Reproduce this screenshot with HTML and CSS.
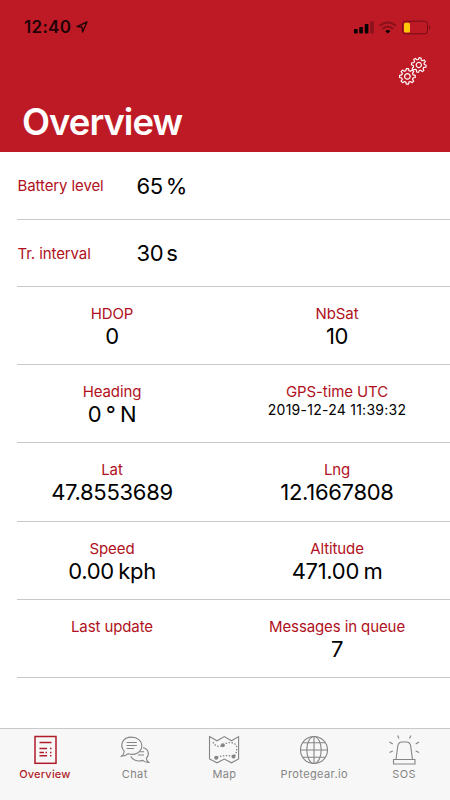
FILE: index.html
```html
<!DOCTYPE html>
<html lang="en">
<head>
    <meta charset="UTF-8">
    <meta name="viewport" content="width=device-width, initial-scale=1.0">
    <title>Overview</title>
    <link rel="stylesheet" href="styles.css">
</head>
<body>
<header class="header">
    <div class="status-bar">
        <div class="status-time">
            <span>12:40</span>
            <svg class="location" viewBox="0 0 12 12">
                <path d="M1 5.6 L11 1 L6.6 11 L6 6 Z"/>
            </svg>
        </div>
        <svg class="status-icons" viewBox="0 0 78 16">
            <rect x="1" y="9" width="3.6" height="4.4" rx=".7"/>
            <rect x="6.3" y="7" width="3.6" height="6.4" rx=".7"/>
            <rect x="11.8" y="4" width="3.6" height="9.4" rx=".7"/>
            <rect x="17.2" y="1.4" width="3.6" height="12" rx=".7" class="dim"/>
            <path class="wifi" d="M26.6 5.8 Q34.8 -1 43 5.8 M29.4 9 Q34.8 4.4 40.2 9"/>
            <path d="M32.3 11.2 Q34.8 8.9 37.3 11.2 L34.8 13.5 Z"/>
            <rect class="battery" x="49.5" y="1.2" width="25" height="12.6" rx="3"/>
            <rect class="charge" x="51" y="2.7" width="6" height="9.7" rx="1.5"/>
            <path class="battery-tip" d="M76 5.2 Q78.2 7.4 76 9.6 Z"/>
        </svg>
    </div>
    <div class="toolbar">
        <svg class="gears" viewBox="0 0 30 30">
            <defs>
                <g id="gear">
                    <path d="M-1.5 -5.7 L-1.1 -7.8 L1.1 -7.8 L1.5 -5.7 L2.97 -5.1 L4.8 -6.3 L6.3 -4.8 L5.1 -2.97 L5.7 -1.5 L7.8 -1.1 L7.8 1.1 L5.7 1.5 L5.1 2.97 L6.3 4.8 L4.8 6.3 L2.97 5.1 L1.5 5.7 L1.1 7.8 L-1.1 7.8 L-1.5 5.7 L-2.97 5.1 L-4.8 6.3 L-6.3 4.8 L-5.1 2.97 L-5.7 1.5 L-7.8 1.1 L-7.8 -1.1 L-5.7 -1.5 L-5.1 -2.97 L-6.3 -4.8 L-4.8 -6.3 L-2.97 -5.1 Z"/>
                    <circle r="2.8"/>
                </g>
            </defs>
            <use href="#gear" transform="translate(20.8 9) rotate(10) scale(.94)"/>
            <use href="#gear" transform="translate(9.4 20.4)"/>
        </svg>
    </div>
    <h1>Overview</h1>
</header>

<main class="list">
    <div class="row single">
        <span class="label">Battery level</span>
        <span class="value">65 %</span>
    </div>
    <div class="row single">
        <span class="label">Tr. interval</span>
        <span class="value">30 s</span>
    </div>
    <div class="row pair">
        <div class="cell"><span class="label">HDOP</span><span class="value">0</span></div>
        <div class="cell"><span class="label">NbSat</span><span class="value">10</span></div>
    </div>
    <div class="row pair">
        <div class="cell"><span class="label">Heading</span><span class="value">0 ° N</span></div>
        <div class="cell"><span class="label">GPS-time UTC</span><span class="value small">2019-12-24 11:39:32</span></div>
    </div>
    <div class="row pair">
        <div class="cell"><span class="label">Lat</span><span class="value">47.8553689</span></div>
        <div class="cell"><span class="label">Lng</span><span class="value">12.1667808</span></div>
    </div>
    <div class="row pair">
        <div class="cell"><span class="label">Speed</span><span class="value">0.00 kph</span></div>
        <div class="cell"><span class="label">Altitude</span><span class="value">471.00 m</span></div>
    </div>
    <div class="row pair">
        <div class="cell"><span class="label">Last update</span></div>
        <div class="cell"><span class="label">Messages in queue</span><span class="value">7</span></div>
    </div>
</main>

<nav class="tabs">
    <a class="tab active">
        <svg viewBox="0 0 32 32">
            <rect x="6" y="3.5" width="21" height="26.8"/>
            <path d="M10.5 9.5 H22.5 M10.5 15.5 H18 M10.5 19.5 H15 M16.5 19.5 H18 M10.5 22.8 H18 M21 15.5 H22.5 M21 19.5 H22.5 M21 22.8 H22.5"/>
        </svg>
        <span>Overview</span>
    </a>
    <a class="tab">
        <svg viewBox="0 0 32 32">
            <path d="M5.2 18.2 C-.1 12.1 4 4.1 12.5 4.1 C18.5 4.1 22.8 7.9 22.8 12.8 C22.8 19.1 16 22.9 9.2 20.7 Q6.8 23.1 2.4 23.1 Q5.2 21.1 5.2 18.2 Z"/>
            <path d="M24 14.8 C29.5 15.6 31 21.3 27.4 25.2 Q27.3 27.6 29.8 29.4 Q26.2 29.6 23.8 27.4 C18.2 28.9 13 27.1 11.8 23.2 M7.6 9.5 H17.8 M7.6 12.5 H17.8 M7.6 15.5 H15 M20.8 18.8 H25 M19 22 H25"/>
        </svg>
        <span>Chat</span>
    </a>
    <a class="tab">
        <svg viewBox="0 0 32 32">
            <path d="M1.5 3.6 L9 7.8 L16.3 3.6 L23.5 7.8 L30.6 3.6 V26 L23.5 29.8 L16.3 26 L9 29.8 L1.5 26 Z"/>
            <path class="dots" d="M5 9.1 Q8 15.1 14 12.6 C19 8.1 28.5 8.6 28.8 14.6 Q29 20.6 25.5 23.6 Q17 21.1 8.5 24.6"/>
            <g class="points">
                <circle cx="14.8" cy="12.2" r="2"/>
                <circle cx="8.2" cy="24.8" r="2"/>
                <circle cx="25.5" cy="23.6" r="2"/>
            </g>
        </svg>
        <span>Map</span>
    </a>
    <a class="tab">
        <svg viewBox="0 0 32 32">
            <circle cx="16" cy="17" r="13.5"/>
            <ellipse cx="16" cy="17" rx="7.2" ry="13.5"/>
            <path d="M16 3.5 V30.5 M2.5 17 H29.5 M4.8 9.8 H27.2 M4.8 24.2 H27.2"/>
        </svg>
        <span>Protegear.io</span>
    </a>
    <a class="tab">
        <svg viewBox="0 0 32 32">
            <path d="M5.5 26.5 H27 V31 H5.5 Z M8 26.5 L9.8 13 Q10.5 9 14 9 H18.5 Q22 9 22.7 13 L24.5 26.5 M9.6 2.5 L11 5.4 M22.9 2.5 L21.5 5.4 M1.5 9 L4.8 10.9 M31 9 L27.7 10.9 M1.5 19.5 L4.8 18 M31 19.5 L27.7 18"/>
        </svg>
        <span>SOS</span>
    </a>
</nav>
</body>
</html>
```
FILE: styles.css
```css
* {
    box-sizing: border-box;
}

body {
    margin: 0;
    height: 800px;
    display: flex;
    flex-direction: column;
    font-family: Inter, "Liberation Sans", sans-serif;
    background-color: #ffffff;
    color: #000000;
    overflow: hidden;
}

.header {
    height: 152px;
    background-color: #be1a26;
}

.status-bar {
    display: flex;
    justify-content: space-between;
    align-items: center;
    height: 54px;
    padding: 0 19px 0 24px;
}

.status-time {
    display: flex;
    align-items: center;
    gap: 5px;
    font-size: 17px;
    font-weight: 600;
    letter-spacing: 0.3px;
    color: #210306;
}

.location {
    width: 12px;
    height: 12px;
    fill: none;
    stroke: #210306;
    stroke-width: 1.4;
    stroke-linejoin: round;
}

.status-icons {
    width: 78px;
    height: 16px;
    margin-top: 1px;
    overflow: visible;
}

.status-icons .dim {
    fill: #8b111b;
}

.status-icons .wifi {
    fill: none;
    stroke: #8b111b;
    stroke-width: 2.2;
}

.status-icons .battery {
    fill: none;
    stroke: #760d16;
}

.status-icons .battery-tip {
    fill: #760d16;
}

.status-icons .charge {
    fill: #ffc709;
}

.toolbar {
    display: flex;
    justify-content: flex-end;
    height: 46px;
    padding: 2px 22px 0 0;
}

.gears {
    width: 30px;
    height: 30px;
    fill: none;
    stroke: #ffffff;
    stroke-width: 1.2;
    stroke-linejoin: round;
}

h1 {
    margin: 0;
    padding-left: 22px;
    font-size: 36.5px;
    line-height: 44px;
    font-weight: 600;
    letter-spacing: -1px;
    color: #ffffff;
}

.list {
    flex: 1;
    padding-left: 17px;
}

.row {
    display: flex;
    border-bottom: 1px solid #c8c7cc;
}

.single {
    height: 67.5px;
    padding: 0 0 0 0.5px;
    align-items: center;
}

.single .label {
    width: 119px;
    padding-top: 2px;
}

.single .value {
    padding-top: 1px;
    word-spacing: -3px;
}

.pair {
    height: 78.2px;
    padding-top: 17px;
}

.cell {
    width: 225px;
    display: flex;
    flex-direction: column;
    align-items: center;
}

.cell:first-child {
    width: 190px;
    margin-right: 17.5px;
}

.label {
    font-size: 15px;
    line-height: 20px;
    letter-spacing: -0.1px;
    color: #b01020;
}

.value {
    font-size: 22px;
    line-height: 24px;
    letter-spacing: -0.3px;
    word-spacing: -1.5px;
}

.value.small {
    font-size: 14px;
    line-height: 16px;
    letter-spacing: 0.25px;
    word-spacing: 0;
}

.tabs {
    display: flex;
    height: 72px;
    padding: 4px 1px 0 0;
    border-top: 1px solid #c9c9c9;
    background-color: #f7f7f7;
}

.tab {
    flex: 1;
    display: flex;
    flex-direction: column;
    align-items: center;
    font-size: 11px;
    line-height: 14px;
    font-weight: 400;
    letter-spacing: 0.4px;
    color: #858585;
}

.tab svg {
    width: 32px;
    height: 32px;
    margin-bottom: 2px;
    fill: none;
    stroke: currentColor;
    stroke-width: 1.1;
}

.tab .dots {
    stroke-width: 1.3;
    stroke-dasharray: 1.4 1.6;
}

.tab .points {
    fill: currentColor;
    stroke: none;
}

.tab.active {
    color: #b01c2a;
    font-weight: 500;
    letter-spacing: 0.2px;
}

.tab.active svg {
    stroke-width: 1.5;
}
```
